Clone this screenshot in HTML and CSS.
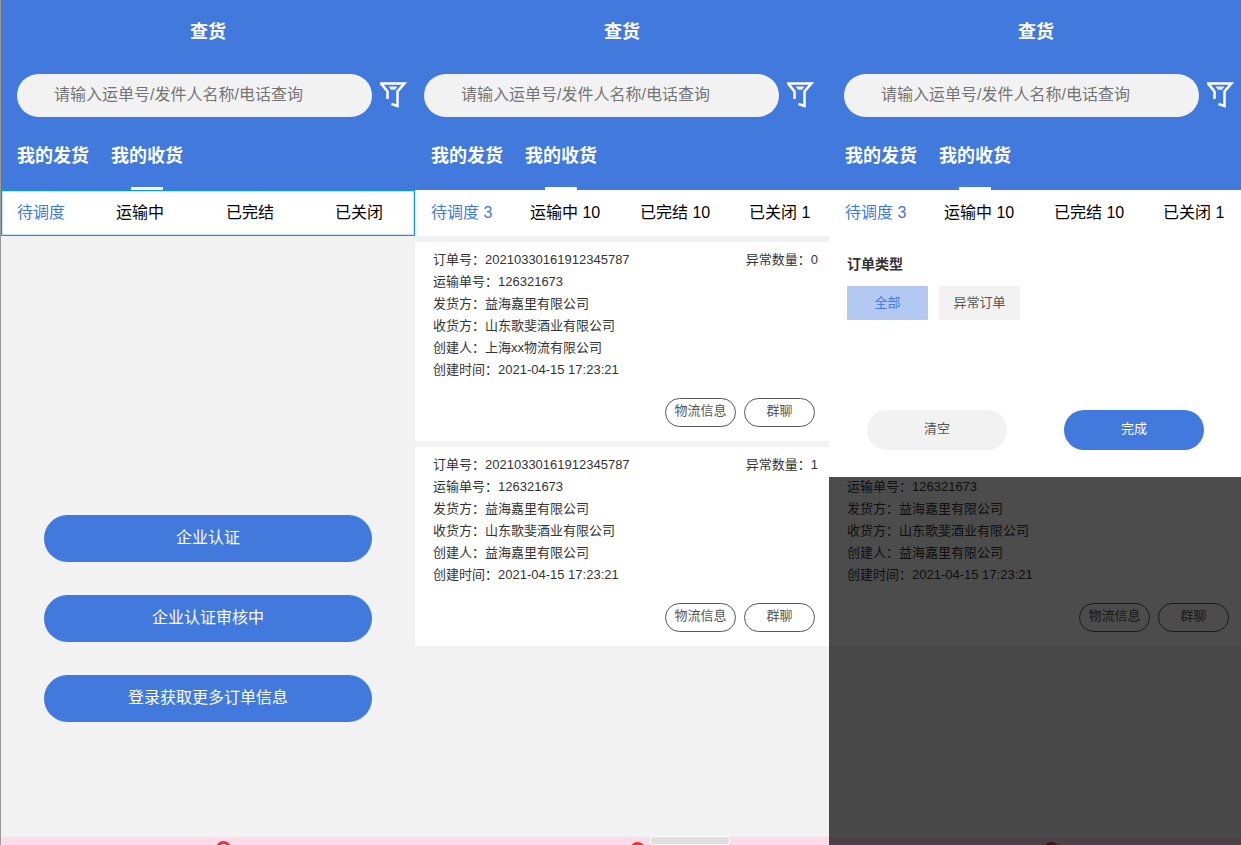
FILE: index.html
```html
<!DOCTYPE html>
<html lang="zh-CN">
<head>
<meta charset="utf-8">
<title>查货</title>
<link rel="stylesheet" href="styles.css">
</head>
<body>
<svg class="sprite" aria-hidden="true">
  <symbol id="funnel" viewBox="0 0 27 30">
    <path d="M7.5 18V10.5L1 2.4H24.5L17.5 10.5V25L11.5 23" fill="none" stroke="#fff" stroke-width="2.5"/>
    <path d="M8.5 5.4H17.5L15 8.8H11Z" fill="#fff" fill-opacity=".9"/>
  </symbol>
</svg>
<main class="board">

  <section class="screen">
    <header class="top">
      <h1 class="title">查货</h1>
      <div class="search">
        <input class="search-box" type="text" aria-label="查询" placeholder="请输入运单号/发件人名称/电话查询">
        <button class="filter" aria-label="筛选"><svg class="filter-icon"><use href="#funnel"/></svg></button>
      </div>
      <nav class="tabs">
        <button class="tab">我的发货</button>
        <button class="tab tab-active">我的收货</button>
      </nav>
    </header>
    <nav class="states states-selected">
      <button class="state state-active">待调度</button>
      <button class="state">运输中</button>
      <button class="state">已完结</button>
      <button class="state">已关闭</button>
    </nav>
    <div class="entry">
      <button class="primary">企业认证</button>
      <button class="primary">企业认证审核中</button>
      <button class="primary">登录获取更多订单信息</button>
    </div>
    <footer class="bottom"><span class="dot dot-ring"></span></footer>
  </section>

  <section class="screen">
    <header class="top">
      <h1 class="title">查货</h1>
      <div class="search search-near">
        <input class="search-box" type="text" aria-label="查询" placeholder="请输入运单号/发件人名称/电话查询">
        <button class="filter" aria-label="筛选"><svg class="filter-icon"><use href="#funnel"/></svg></button>
      </div>
      <nav class="tabs">
        <button class="tab">我的发货</button>
        <button class="tab tab-active">我的收货</button>
      </nav>
    </header>
    <nav class="states">
      <button class="state state-active">待调度 3</button>
      <button class="state">运输中 10</button>
      <button class="state">已完结 10</button>
      <button class="state">已关闭 1</button>
    </nav>
    <div class="orders">
      <article class="order">
        <div class="order-head"><span>订单号：20210330161912345787</span><span>异常数量：0</span></div>
        <p>运输单号：126321673</p>
        <p>发货方：益海嘉里有限公司</p>
        <p>收货方：山东歌斐酒业有限公司</p>
        <p>创建人：上海xx物流有限公司</p>
        <p>创建时间：2021-04-15 17:23:21</p>
        <div class="order-actions"><button class="pill">物流信息</button><button class="pill">群聊</button></div>
      </article>
      <article class="order">
        <div class="order-head"><span>订单号：20210330161912345787</span><span>异常数量：1</span></div>
        <p>运输单号：126321673</p>
        <p>发货方：益海嘉里有限公司</p>
        <p>收货方：山东歌斐酒业有限公司</p>
        <p>创建人：益海嘉里有限公司</p>
        <p>创建时间：2021-04-15 17:23:21</p>
        <div class="order-actions"><button class="pill">物流信息</button><button class="pill">群聊</button></div>
      </article>
    </div>
    <footer class="bottom"><span class="dot"></span></footer>
    <span class="handle"></span>
  </section>

  <section class="screen">
    <header class="top">
      <h1 class="title">查货</h1>
      <div class="search search-mid">
        <input class="search-box" type="text" aria-label="查询" placeholder="请输入运单号/发件人名称/电话查询">
        <button class="filter" aria-label="筛选"><svg class="filter-icon"><use href="#funnel"/></svg></button>
      </div>
      <nav class="tabs">
        <button class="tab">我的发货</button>
        <button class="tab tab-active">我的收货</button>
      </nav>
    </header>
    <nav class="states">
      <button class="state state-active">待调度 3</button>
      <button class="state">运输中 10</button>
      <button class="state">已完结 10</button>
      <button class="state">已关闭 1</button>
    </nav>
    <div class="under">
      <div class="orders">
        <article class="order order-blank"></article>
        <article class="order">
          <div class="order-head"></div>
          <p>运输单号：126321673</p>
          <p>发货方：益海嘉里有限公司</p>
          <p>收货方：山东歌斐酒业有限公司</p>
          <p>创建人：益海嘉里有限公司</p>
          <p>创建时间：2021-04-15 17:23:21</p>
          <div class="order-actions"><button class="pill">物流信息</button><button class="pill">群聊</button></div>
        </article>
      </div>
      <footer class="bottom"><span class="dot"></span></footer>
      <div class="mask">
        <div class="sheet">
          <h2 class="sheet-title">订单类型</h2>
          <div class="chips">
            <button class="chip chip-active">全部</button>
            <button class="chip">异常订单</button>
          </div>
          <div class="sheet-actions">
            <button class="action">清空</button>
            <button class="action action-main">完成</button>
          </div>
        </div>
      </div>
    </div>
  </section>

</main>
</body>
</html>
```
FILE: styles.css
```css
* {
  box-sizing: border-box;
}

body {
  margin: 0;
  background: #f2f2f2;
  color: #333;
  font-family: "Liberation Sans", "Noto Sans CJK SC", sans-serif;
  font-size: 13px;
  overflow: hidden;
}

h1, h2, p {
  margin: 0;
}

button {
  margin: 0;
  padding: 0;
  border: 0;
  background: none;
  color: inherit;
  font: inherit;
}

.sprite {
  display: none;
}

.board {
  display: grid;
  grid-template-columns: repeat(3, minmax(414px, 1fr));
  min-height: 100vh;
  border-left: 1px solid #999;
}

.screen {
  position: relative;
  display: flex;
  flex-direction: column;
}

/* Header */
.top {
  padding-top: 20px;
  background: #4179dd;
  color: #fff;
}

.title {
  font-size: 18px;
  line-height: 24px;
  text-align: center;
}

.search {
  display: flex;
  align-items: center;
  gap: 8px;
  margin-top: 30px;
  padding: 0 8px 0 16px;
}

.search-near {
  padding: 0 15px 0 9px;
}

.search-mid {
  padding: 0 9px 0 15px;
}

.search-box {
  flex: 1;
  min-width: 0;
  height: 43px;
  padding: 0 37px 2px;
  border: 0;
  border-radius: 22px;
  background: #f2f2f2;
  font: inherit;
  font-size: 16px;
}

.search-box::placeholder {
  color: #757575;
}

.filter {
  display: flex;
}

.filter-icon {
  width: 27px;
  height: 30px;
  overflow: visible;
}

.tabs {
  display: flex;
  gap: 22px;
  margin-top: 27px;
  padding-left: 16px;
}

.tab {
  display: flex;
  flex-direction: column;
  align-items: center;
  justify-content: space-between;
  height: 46px;
  font-size: 18px;
  font-weight: bold;
  line-height: 24px;
}

.tab-active::after {
  content: "";
  width: 32px;
  height: 3px;
  background: #fff;
}

/* Order states */
.states {
  display: grid;
  grid-template-columns: 99fr 110fr 109fr 80fr;
  height: 46px;
  padding-left: 16px;
  background: #fff;
  color: #000;
}

.states-selected {
  box-shadow: inset 0 0 0 1px #0d96e2, inset 0 0 0 2px #c5e6f8;
}

.state {
  padding-bottom: 4px;
  font-size: 16px;
  text-align: left;
}

.state-active {
  color: #4179dd;
}

/* Sign-in buttons */
.entry {
  display: grid;
  gap: 33px;
  padding: 279px 43px 0;
}

.primary {
  height: 47px;
  padding-bottom: 5px;
  border-radius: 24px;
  background: #4179dd;
  color: #fff;
  font-size: 16px;
}

/* Order cards */
.orders {
  display: grid;
  gap: 6px;
  padding-top: 6px;
}

.order {
  padding: 7px 14px 14px 18px;
  background: #fff;
  line-height: 22px;
}

.order-blank {
  height: 199px;
}

.order-head {
  display: flex;
  justify-content: space-between;
  min-height: 22px;
  margin-right: -3px;
}

.order-actions {
  display: flex;
  justify-content: flex-end;
  gap: 8px;
  margin-top: 17px;
}

.pill {
  width: 71px;
  height: 29px;
  padding-bottom: 3px;
  border: 1px solid #555;
  border-radius: 15px;
  color: #555;
}

/* Bottom strip */
.bottom {
  display: flex;
  height: 8px;
  margin-top: auto;
  padding: 4px 0 0 215px;
  background: #fddbea;
  overflow: hidden;
}

.dot {
  flex: none;
  width: 15px;
  height: 15px;
  margin-top: 1px;
  border-radius: 50%;
  background: #f5302f;
}

.dot-ring {
  margin-top: 0;
  border: 3px solid #f5302f;
  background: #fff;
}

.handle {
  position: absolute;
  bottom: 0;
  left: 235px;
  width: 80px;
  height: 9px;
  border: 1px solid #fff;
  border-radius: 4px;
  background: #e2dedf;
}

/* Filter sheet */
.under {
  position: relative;
  display: flex;
  flex: 1;
  flex-direction: column;
}

.mask {
  position: absolute;
  inset: 0;
  background: rgba(0, 0, 0, 0.7);
}

.sheet {
  padding: 18px 18px 27px;
  background: #fff;
}

.sheet-title {
  font-size: 14px;
  line-height: 20px;
}

.chips {
  display: flex;
  gap: 11px;
  margin-top: 12px;
}

.chip {
  width: 81px;
  height: 34px;
  padding-bottom: 4px;
  border-radius: 1px;
  background: #f2f2f2;
  color: #555;
}

.chip-active {
  background: #b3c9f1;
  color: #4179dd;
}

.sheet-actions {
  display: flex;
  justify-content: space-between;
  margin-top: 90px;
  padding: 0 21px 0 20px;
}

.action {
  width: 140px;
  height: 40px;
  padding-bottom: 5px;
  border-radius: 20px;
  background: #f2f2f2;
  color: #555;
}

.action-main {
  background: #4179dd;
  color: #fff;
}
```
